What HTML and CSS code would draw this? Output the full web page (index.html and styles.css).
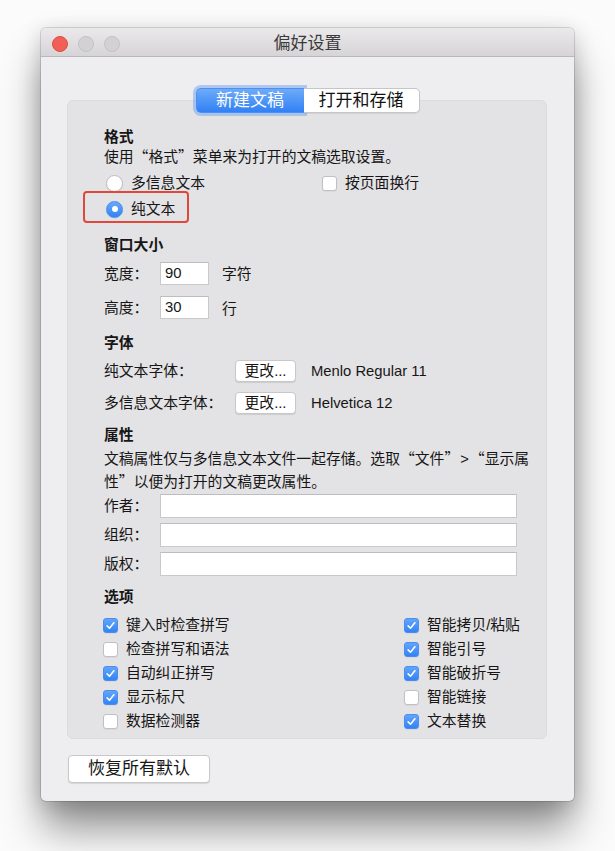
FILE: index.html
```html
<!DOCTYPE html>
<html lang="zh-CN">
<head>
    <meta charset="UTF-8">
    <meta name="viewport" content="width=device-width, initial-scale=1.0">
    <title>偏好设置</title>
    <link rel="stylesheet" href="styles.css">
</head>
<body>
    <div class="window">
        <div class="titlebar">
            <div class="lights">
                <span class="light close"></span>
                <span class="light"></span>
                <span class="light"></span>
            </div>
            <div class="title">偏好设置</div>
        </div>
        <div class="content">
            <div class="tabs">
                <button class="tab tab-new active">新建文稿</button>
                <button class="tab tab-open">打开和存储</button>
            </div>
            <div class="group">
                <h2 class="section-title first">格式</h2>
                <p class="desc">使用<span class="q">“</span>格式<span class="q">”</span>菜单来为打开的文稿选取设置。</p>
                <div class="format-grid">
                    <label class="radio"><span class="radio-mark"></span>多信息文本</label>
                    <label class="check"><span class="box"></span>按页面换行</label>
                    <label class="radio on highlight"><span class="radio-mark"></span>纯文本</label>
                </div>

                <h2 class="section-title size-title">窗口大小</h2>
                <div class="field-row size-row first-row">
                    <span class="label">宽度：</span>
                    <div class="input small">90</div>
                    <span class="unit">字符</span>
                </div>
                <div class="field-row size-row second-row">
                    <span class="label">高度：</span>
                    <div class="input small">30</div>
                    <span class="unit unit-low">行</span>
                </div>

                <h2 class="section-title font-title">字体</h2>
                <div class="field-row font-row first-row">
                    <span class="label wide">纯文本字体：</span>
                    <button class="change-btn">更改...</button>
                    <span class="font-name">Menlo Regular 11</span>
                </div>
                <div class="field-row font-row second-row">
                    <span class="label wide">多信息文本字体：</span>
                    <button class="change-btn">更改...</button>
                    <span class="font-name">Helvetica 12</span>
                </div>

                <h2 class="section-title attr-title">属性</h2>
                <p class="attr-desc">文稿属性仅与多信息文本文件一起存储。选取<span class="q">“</span>文件<span class="q">”</span><span class="gt">&gt;</span><span class="q">“</span>显示属<br>性<span class="q">”</span>以便为打开的文稿更改属性。</p>
                <div class="attr-list">
                    <div class="field-row attr-row">
                        <span class="label">作者：</span>
                        <div class="input long"></div>
                    </div>
                    <div class="field-row attr-row">
                        <span class="label">组织：</span>
                        <div class="input long"></div>
                    </div>
                    <div class="field-row attr-row">
                        <span class="label">版权：</span>
                        <div class="input long"></div>
                    </div>
                </div>

                <h2 class="section-title options-title">选项</h2>
                <div class="options">
                    <label class="check"><span class="box on"><svg viewBox="0 0 15 15"><polyline points="3.6,7.9 6.3,10.6 11.4,4.3"/></svg></span>键入时检查拼写</label>
                    <label class="check"><span class="box on"><svg viewBox="0 0 15 15"><polyline points="3.6,7.9 6.3,10.6 11.4,4.3"/></svg></span>智能拷贝/粘贴</label>
                    <label class="check"><span class="box"></span>检查拼写和语法</label>
                    <label class="check"><span class="box on"><svg viewBox="0 0 15 15"><polyline points="3.6,7.9 6.3,10.6 11.4,4.3"/></svg></span>智能引号</label>
                    <label class="check"><span class="box on"><svg viewBox="0 0 15 15"><polyline points="3.6,7.9 6.3,10.6 11.4,4.3"/></svg></span>自动纠正拼写</label>
                    <label class="check"><span class="box on"><svg viewBox="0 0 15 15"><polyline points="3.6,7.9 6.3,10.6 11.4,4.3"/></svg></span>智能破折号</label>
                    <label class="check"><span class="box on"><svg viewBox="0 0 15 15"><polyline points="3.6,7.9 6.3,10.6 11.4,4.3"/></svg></span>显示标尺</label>
                    <label class="check"><span class="box"></span>智能链接</label>
                    <label class="check"><span class="box"></span>数据检测器</label>
                    <label class="check"><span class="box on"><svg viewBox="0 0 15 15"><polyline points="3.6,7.9 6.3,10.6 11.4,4.3"/></svg></span>文本替换</label>
                </div>
            </div>
            <button class="reset-btn">恢复所有默认</button>
        </div>
    </div>
</body>
</html>
```

FILE: styles.css
```css
html, body {
    min-height: 100vh;
}
body {
    margin: 0;
    padding-top: 28px;
    box-sizing: border-box;
    background-color: #fbfbfb;
    font-family: "Liberation Sans", "Noto Sans CJK SC", sans-serif;
    font-size: 14.8px;
    line-height: 20px;
    color: #161616;
}
.window {
    width: 533px;
    margin: 0 auto;
    background-color: #eeedef;
    border-radius: 5px;
    box-shadow: 0 0 0 1px rgba(0, 0, 0, 0.13), 0 30px 40px -2px rgba(0, 0, 0, 0.42), 0 4px 22px rgba(0, 0, 0, 0.18);
}
.titlebar {
    height: 28px;
    display: grid;
    grid-template-columns: 1fr auto 1fr;
    align-items: center;
    background: linear-gradient(#ebe9eb, #d6d4d6);
    border-bottom: 1px solid #b8b7b9;
    border-radius: 5px 5px 0 0;
}
.lights {
    display: flex;
    gap: 10px;
    padding-left: 11px;
    padding-top: 3px;
}
.light {
    width: 16px;
    height: 16px;
    box-sizing: border-box;
    border-radius: 50%;
    background-color: #d2d1d3;
    border: 1px solid #c3c2c4;
}
.light.close {
    background-color: #f25f57;
    border-color: #de4c45;
}
.title {
    font-size: 17px;
    color: #3b3b3b;
    padding-top: 4px;
}
.content {
    padding: 31px 27px 18px 26px;
}
.tabs {
    display: flex;
    justify-content: center;
    position: relative;
    z-index: 1;
    padding-left: 1px;
}
.tab {
    height: 25px;
    border: 1px solid #c6c5c7;
    background-color: #fff;
    font-family: inherit;
    font-size: 17px;
    line-height: 21px;
    color: #111;
    padding: 0;
    margin: 0;
}
.tab-new {
    width: 108px;
    border-radius: 5px 0 0 5px;
    border-right: none;
}
.tab-open {
    width: 116px;
    border-radius: 0 5px 5px 0;
    border-left: none;
    box-shadow: 0 1px 1px rgba(0, 0, 0, 0.08);
}
.tab.active {
    background: linear-gradient(#6eabf9, #3181f5);
    border-color: #4c8ff2;
    color: #fff;
    box-shadow: 0 0 0 3px rgba(120, 168, 240, 0.55);
}
.group {
    margin-top: -13px;
    padding: 27px 0 5px 36px;
    background-color: #e3e2e4;
    border: 1px solid #dcdbdd;
    border-radius: 6px;
    box-sizing: border-box;
    width: 480px;
}
.section-title {
    margin: 0;
    font-size: 14.8px;
    font-weight: bold;
    line-height: 20px;
    height: 20px;
}
.section-title.first {
    line-height: 19px;
    height: 19px;
}
.desc {
    margin: 0;
    line-height: 18px;
    height: 18px;
}
.q {
    font-family: "Noto Sans CJK SC", sans-serif;
}
.gt {
    padding: 0 1px;
}
.format-grid {
    display: grid;
    grid-template-columns: 216px auto;
    grid-auto-rows: 26px;
    margin: 5px 0 0 2px;
}
.radio, .check {
    display: flex;
    align-items: center;
    white-space: nowrap;
}
.radio-mark {
    width: 17px;
    height: 17px;
    box-sizing: border-box;
    border-radius: 50%;
    background-color: #fff;
    border: 1px solid #bdbcbe;
    box-shadow: 0 1px 1px rgba(0, 0, 0, 0.06);
    margin-right: 8px;
    display: flex;
    align-items: center;
    justify-content: center;
}
.radio.on .radio-mark {
    background: linear-gradient(#69a9f9, #3282f5);
    border-color: #4a8cf0;
}
.radio.on .radio-mark::after {
    content: "";
    width: 6px;
    height: 6px;
    border-radius: 50%;
    background-color: #fff;
}
.highlight {
    position: relative;
    grid-column: 1;
}
.highlight::after {
    content: "";
    position: absolute;
    left: -23px;
    top: -5px;
    width: 106px;
    height: 32px;
    box-sizing: border-box;
    border: 2px solid #e1483b;
    border-radius: 4px;
}
.box {
    width: 15px;
    height: 15px;
    box-sizing: border-box;
    border-radius: 3px;
    background-color: #fff;
    border: 1px solid #c0bfc1;
    box-shadow: 0 1px 1px rgba(0, 0, 0, 0.05);
    margin-right: 8px;
    flex-shrink: 0;
}
.box.on {
    background: linear-gradient(#62a6f9, #3283f5);
    border-color: #4a8cf0;
}
.box svg {
    display: block;
    width: 13px;
    height: 13px;
}
.box polyline {
    fill: none;
    stroke: #fff;
    stroke-width: 1.8;
    stroke-linecap: round;
    stroke-linejoin: round;
}
.size-title {
    margin-top: 13px;
}
.field-row {
    display: flex;
    align-items: center;
}
.label {
    width: 56px;
    flex-shrink: 0;
}
.label.wide {
    width: 131px;
}
.input {
    box-sizing: border-box;
    background-color: #fff;
    border: 1px solid #c9c8ca;
    border-top-color: #bdbcbe;
    padding-left: 4px;
}
.input.small {
    width: 49px;
    height: 23px;
    line-height: 21px;
}
.input.long {
    width: 357px;
    height: 24px;
}
.unit {
    margin-left: 13px;
}
.unit-low {
    padding-top: 3px;
    line-height: 20px;
    height: 20px;
}
.size-row {
    height: 23px;
}
.size-row.first-row {
    margin-top: 7px;
}
.size-row.second-row {
    margin-top: 11px;
}
.font-title {
    margin-top: 14px;
}
.font-row {
    height: 22px;
}
.font-row.first-row {
    margin-top: 7px;
}
.font-row.second-row {
    margin-top: 10px;
}
.change-btn {
    width: 61px;
    height: 22px;
    padding: 0;
    background-color: #fff;
    border: 1px solid #c8c7c9;
    border-radius: 4px;
    box-shadow: 0 1px 1px rgba(0, 0, 0, 0.1);
    font-family: inherit;
    font-size: 14.8px;
    line-height: 20px;
    color: #161616;
}
.font-name {
    margin-left: 15px;
}
.attr-title {
    margin-top: 11px;
}
.attr-desc {
    margin: 2px 0 0;
    line-height: 22px;
    height: 44px;
    white-space: nowrap;
}
.attr-list {
    display: flex;
    flex-direction: column;
    gap: 5px;
    margin-top: 3px;
}
.attr-row {
    height: 24px;
}
.options-title {
    margin-top: 11px;
}
.options {
    display: grid;
    grid-template-columns: 301px auto;
    grid-auto-rows: 24px;
    margin: 6px 0 0 -1px;
}
.reset-btn {
    display: block;
    margin: 16px 0 0 1px;
    width: 142px;
    height: 28px;
    padding: 0;
    background-color: #fff;
    border: 1px solid #c8c7c9;
    border-radius: 4px;
    box-shadow: 0 1px 1px rgba(0, 0, 0, 0.1);
    font-family: inherit;
    font-size: 17px;
    line-height: 26px;
    color: #161616;
}
```
